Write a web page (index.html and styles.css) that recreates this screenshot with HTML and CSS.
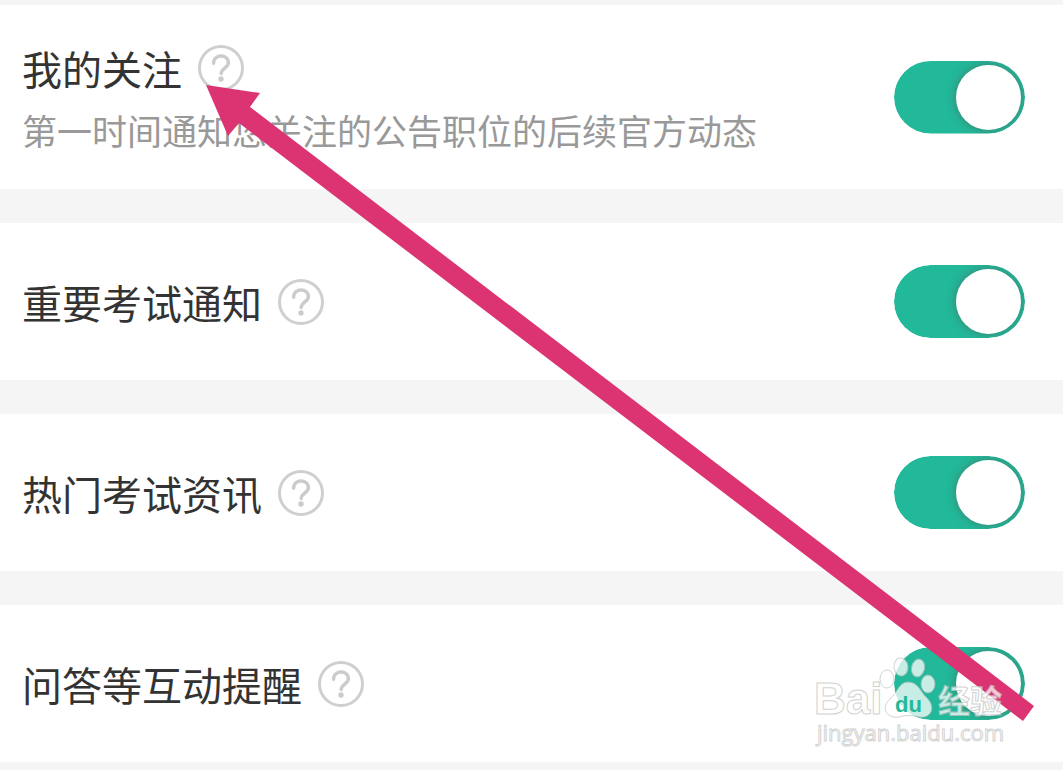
FILE: index.html
```
<!DOCTYPE html>
<html lang="zh-CN">

<head>
    <meta charset="UTF-8">
    <meta name="viewport" content="width=device-width, initial-scale=1">
    <title>消息通知设置</title>
    <link rel="stylesheet" href="styles.css">
</head>
<body>
    <svg class="defs" width="0" height="0" aria-hidden="true">
        <symbol id="icon-help" viewBox="0 0 46 46">
            <circle cx="23" cy="23" r="21.5" fill="none" stroke="#cfcfcf" stroke-width="3"/>
            <path d="M15.6 18.2C15.6 8.6 30.6 8.8 30.4 18C30.3 22.6 23.2 23.4 23.2 28.6" fill="none" stroke="#cbcbcb" stroke-width="3.4" stroke-linecap="round"/>
            <circle cx="23" cy="34" r="2.7" fill="#cbcbcb"/>
        </symbol>
    </svg>

    <main class="settings">
        <section class="item item-tall">
            <div class="info">
                <div class="title">
                    <label for="follow">我的关注</label>
                    <button class="help" type="button" aria-label="说明"><svg><use href="#icon-help"/></svg></button>
                </div>
                <p class="desc">第一时间通知您关注的公告职位的后续官方动态</p>
            </div>
            <input class="switch" type="checkbox" id="follow" checked>
        </section>

        <section class="item">
            <div class="title">
                <label for="notice">重要考试通知</label>
                <button class="help" type="button" aria-label="说明"><svg><use href="#icon-help"/></svg></button>
            </div>
            <input class="switch" type="checkbox" id="notice" checked>
        </section>

        <section class="item">
            <div class="title">
                <label for="news">热门考试资讯</label>
                <button class="help" type="button" aria-label="说明"><svg><use href="#icon-help"/></svg></button>
            </div>
            <input class="switch" type="checkbox" id="news" checked>
        </section>

        <section class="item">
            <div class="title">
                <label for="remind">问答等互动提醒</label>
                <button class="help" type="button" aria-label="说明"><svg><use href="#icon-help"/></svg></button>
            </div>
            <input class="switch" type="checkbox" id="remind" checked>
        </section>

        <!-- pointer to the first help icon -->
        <svg class="arrow" viewBox="0 0 1063 770" aria-hidden="true">
            <path d="M206 85L260 93L250 107L1034 706L1023 721L239 123L228 136Z" fill="#dc3472"/>
        </svg>

        <!-- watermark -->
        <svg class="watermark" viewBox="0 0 200 100" aria-hidden="true">
            <g class="mark">
                <text class="brand" x="2" y="64">Bai</text>
                <ellipse cx="75" cy="29" rx="7" ry="9"/>
                <ellipse cx="89" cy="17" rx="7" ry="9" transform="rotate(-8 89 17)"/>
                <ellipse cx="106" cy="18" rx="6.5" ry="9" transform="rotate(12 106 18)"/>
                <ellipse cx="116" cy="34" rx="7" ry="9"/>
                <path d="M96 32C106 32 108 41 114 47C125 57 119 69 107 67C100 65 93 65 87 67C75 69 68 58 78 49C86 42 87 32 96 32Z"/>
                <text class="cjk" x="126" y="63">经验</text>
                <text class="site" x="5" y="91">jingyan.baidu.com</text>
            </g>
            <text class="du" x="83" y="62">du</text>
        </svg>
    </main>
</body>
</html>
```
FILE: styles.css
```
*{
    box-sizing: border-box;
}

body{
    margin: 0;
    background-color: #f5f5f5;
    font-family: "Noto Sans CJK SC", sans-serif;
    color: #333333;
}

.defs{
    position: absolute;
}

.settings{
    position: relative;
    display: flex;
    flex-direction: column;
    gap: 34px;
    padding: 5px 0 8px;
    overflow: hidden;
}

.item{
    display: flex;
    align-items: center;
    justify-content: space-between;
    padding: 42px 38px 42px 22px;
    background-color: #ffffff;
}

.item-tall{
    padding-top: 34px;
    padding-bottom: 34px;
}

.title{
    display: flex;
    align-items: center;
    gap: 16px;
    font-size: 40px;
    line-height: 58px;
}

.help{
    width: 46px;
    height: 46px;
    padding: 0;
    border: none;
    background: none;
}

.help svg{
    display: block;
    width: 46px;
    height: 46px;
}

.desc{
    margin: 8px 0 0;
    font-size: 35px;
    line-height: 50px;
    color: #999999;
}

.switch{
    appearance: none;
    display: flex;
    flex-shrink: 0;
    width: 131px;
    height: 73px;
    margin: 0;
    padding: 4px;
    border-radius: 37px;
    background-color: #cccccc;
    clip-path: inset(0 round 37px);
}

.switch::before{
    content: "";
    width: 65px;
    height: 65px;
    border-radius: 50%;
    background-color: #ffffff;
    box-shadow: 0 0 10px rgba(80, 90, 80, 0.6);
}

.switch:checked{
    justify-content: flex-end;
    background-color: #22b89a;
}

.watermark{
    position: absolute;
    right: 51px;
    bottom: 20px;
    width: 200px;
    height: 100px;
    overflow: visible;
    pointer-events: none;
}

.mark{
    fill: #ffffff;
    stroke: #c4c4c4;
    stroke-width: 1px;
    opacity: 0.75;
}

.brand{
    font-family: "Liberation Sans", sans-serif;
    font-size: 44px;
    font-weight: bold;
}

.cjk{
    font-family: "Noto Sans CJK SC", sans-serif;
    font-size: 32px;
    font-weight: bold;
}

.site{
    font-family: "Open Sans", sans-serif;
    font-size: 22px;
}

.du{
    font-family: "Liberation Sans", sans-serif;
    font-size: 22px;
    font-weight: bold;
    fill: #22b89a;
}

.arrow{
    position: absolute;
    top: 0;
    left: 0;
    width: 100%;
    pointer-events: none;
}
```
